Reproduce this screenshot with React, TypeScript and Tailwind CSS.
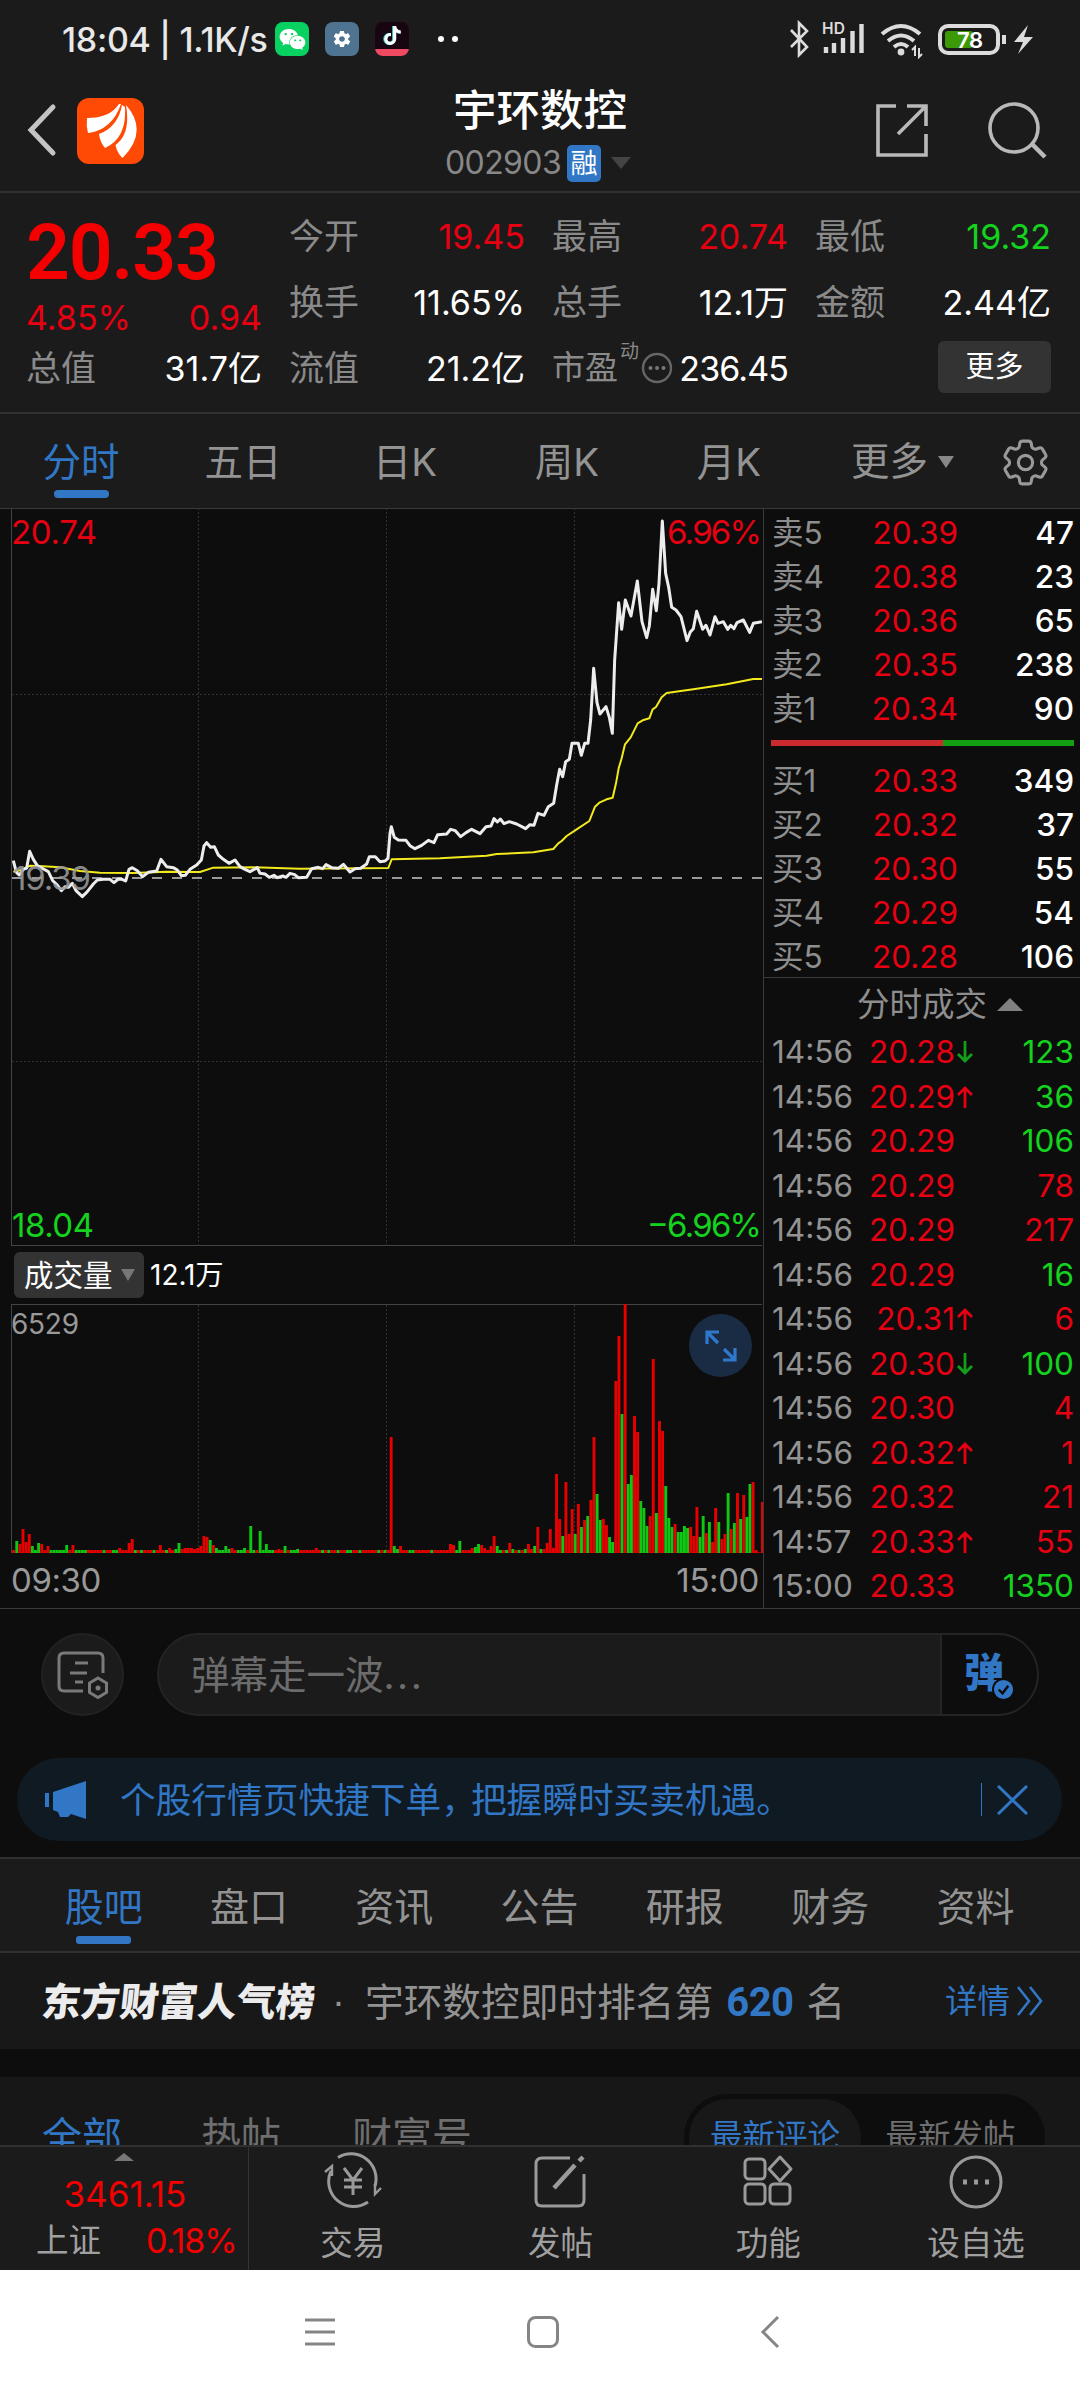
import { FaTiktok, FaWeixin } from "react-icons/fa";
import { HiOutlineCog6Tooth } from "react-icons/hi2";
import { IoMdSettings } from "react-icons/io";

const RED = "#e60012";
const GREEN = "#14d21e";

const PRICE_LINE =
    "40,1082 46,1105 50,1118 58,1125 70,1108 80,1104 89,1054 100,1078 112,1097 125,1104 145,1115 158,1142 172,1155 184,1172 195,1160 205,1162 217,1150 228,1172 247,1190 262,1175 280,1152 292,1140 310,1138 330,1138 342,1148 355,1137 366,1138 377,1143 387,1108 397,1103 412,1112 428,1130 445,1117 470,1113 483,1078 500,1100 520,1103 532,1110 544,1127 556,1126 570,1108 590,1095 604,1080 612,1038 620,1028 632,1042 643,1040 655,1065 670,1078 687,1090 705,1080 720,1100 735,1108 750,1115 772,1103 780,1120 795,1122 808,1132 822,1126 832,1133 848,1128 858,1132 870,1120 884,1124 895,1133 920,1132 935,1106 955,1102 968,1106 978,1094 995,1103 1015,1105 1030,1093 1050,1116 1065,1106 1082,1105 1100,1092 1108,1070 1126,1070 1140,1085 1155,1083 1164,1075 1170,1000 1174,980 1183,1012 1195,1020 1218,1021 1230,1037 1245,1046 1265,1036 1285,1021 1302,1028 1313,1004 1340,1002 1352,988 1366,992 1382,1010 1398,998 1415,988 1440,1001 1458,980 1473,978 1482,956 1492,966 1501,957 1512,971 1528,965 1550,972 1577,986 1590,974 1602,976 1614,940 1632,946 1645,920 1661,910 1670,855 1679,808 1688,830 1697,785 1708,778 1716,730 1735,730 1744,766 1754,730 1764,730 1772,660 1781,505 1791,608 1800,642 1818,620 1828,652 1837,700 1844,480 1856,308 1865,388 1876,300 1893,348 1912,243 1926,365 1940,413 1948,378 1958,268 1969,332 1977,250 1987,63 1997,220 2006,262 2015,322 2028,330 2043,350 2061,422 2071,396 2080,386 2090,334 2108,388 2118,376 2130,405 2145,350 2154,370 2170,365 2183,388 2192,376 2202,386 2211,368 2230,360 2249,397 2260,370 2286,365";

const AVERAGE_LINE =
    "40,1115 65,1110 90,1097 130,1099 180,1102 240,1113 300,1118 400,1119 500,1115 600,1116 640,1103 760,1102 900,1106 1165,1104 1175,1078 1320,1075 1460,1067 1490,1062 1600,1057 1660,1047 1675,1030 1685,1023 1700,1008 1730,988 1768,963 1785,920 1798,908 1820,898 1838,893 1848,850 1856,805 1865,775 1875,733 1892,712 1913,670 1928,661 1948,655 1958,628 1968,621 1985,592 2000,579 2080,568 2180,553 2260,537 2286,537";

// minute index -> bar height, negative means a falling minute
const MORNING: Record<number, number> = {
    1: -12, 2: 9, 3: 24, 4: 11, 5: 19, 6: -7, 7: -3, 8: -10, 9: 9, 11: 7, 17: -8, 19: 8, 34: 5, 37: 10, 38: 14,
    47: 8, 50: 5, 52: -4, 53: -10, 54: 4, 55: 5, 56: 5, 57: 5, 58: 4, 59: 5, 60: 7, 61: 17, 62: 16, 63: -13, 64: 8,
    65: -5, 68: -7, 69: -4, 70: 5, 74: -5, 76: -27, 79: -22, 81: -9, 85: 4, 87: -7, 91: -4, 97: 5, 121: 116,
    122: -7, 123: -4, 124: 7, 140: 9, 141: 8, 143: -12, 147: 5, 148: -6, 149: -9, 150: 8, 151: 5, 153: 7, 154: 17,
    155: -7, 159: 10, 160: -4, 164: -4, 165: 9, 166: 4, 167: -7, 168: 26, 169: -4, 170: 4, 171: 10, 172: 24, 173: 5,
};
const RALLY = [
    79, 34, -17, 71, 19, 44, -19, 49, -26, 33, -37, 53, 116, -59, -33, 34, 28, -16, -11, 172, 217, -139, 249, -69, -78,
    137, 121, -52, -45, -27, 37, 194, -40, 132, 122, -67, -35, -26, 29, -21, -21, -27, -25, 26, 17, 46, -16, -37, 20,
    -31, 11, 45, -31, 14, 19, -60, 24, -30, 60, -34, 58, -36, -69, 71, 3, 0, 51,
];
const QUIET_GREEN = [12, 13, 14, 15, 16, 20, 21, 22, 23, 29, 32, 33, 39, 41, 45, 49, 66, 67, 72, 73, 77, 80, 82, 83, 89, 90, 99, 101, 104, 107, 108, 111, 117, 119, 127, 128, 134, 142, 156, 158, 162];

const volumeBars = Array.from({ length: 241 }, (_, i) => {
    if (i >= 174) return RALLY[i - 174];
    return MORNING[i] ?? (QUIET_GREEN.includes(i) ? -3 : 3);
});

const asks = [
    ["卖5", "20.39", "47"],
    ["卖4", "20.38", "23"],
    ["卖3", "20.36", "65"],
    ["卖2", "20.35", "238"],
    ["卖1", "20.34", "90"],
];
const bids = [
    ["买1", "20.33", "349"],
    ["买2", "20.32", "37"],
    ["买3", "20.30", "55"],
    ["买4", "20.29", "54"],
    ["买5", "20.28", "106"],
];

type Trade = { time: string; price: string; dir?: "up" | "down"; volume: string; buy?: boolean };

const trades: Trade[] = [
    { time: "14:56", price: "20.28", dir: "down", volume: "123" },
    { time: "14:56", price: "20.29", dir: "up", volume: "36" },
    { time: "14:56", price: "20.29", volume: "106" },
    { time: "14:56", price: "20.29", volume: "78", buy: true },
    { time: "14:56", price: "20.29", volume: "217", buy: true },
    { time: "14:56", price: "20.29", volume: "16" },
    { time: "14:56", price: "20.31", dir: "up", volume: "6", buy: true },
    { time: "14:56", price: "20.30", dir: "down", volume: "100" },
    { time: "14:56", price: "20.30", volume: "4", buy: true },
    { time: "14:56", price: "20.32", dir: "up", volume: "1", buy: true },
    { time: "14:56", price: "20.32", volume: "21", buy: true },
    { time: "14:57", price: "20.33", dir: "up", volume: "55", buy: true },
    { time: "15:00", price: "20.33", volume: "1350" },
];

function StatusBar() {
    return (
        <div className="flex h-[78px] items-center pl-[62px] pr-[47px] text-[#e8e8e8]">
            <span className="w-[213px] whitespace-nowrap text-[34px] font-medium tracking-[-0.3px]">18:04 | 1.1K/s</span>
            <div className="flex size-[34px] items-center justify-center rounded-[8px] bg-[#07d160] text-white">
                <FaWeixin size={27} />
            </div>
            <div className="ml-4 flex size-[34px] items-center justify-center rounded-[8px] bg-[#4f7491] text-white">
                <IoMdSettings size={20} />
            </div>
            <div className="relative ml-4 flex size-[34px] justify-center overflow-hidden rounded-[8px] bg-[#170512] pt-1 text-white">
                <FaTiktok className="drop-shadow-[-1px_0_0_#25c4be]" size={19} />
                <div className="absolute inset-x-0 bottom-0 h-[7px] bg-[#f04a62]" />
            </div>
            <div className="ml-[29px] flex gap-2">
                <i className="size-[6px] rounded-full bg-white" />
                <i className="size-[6px] rounded-full bg-white" />
            </div>
            <svg className="ml-auto" width="246" height="40" viewBox="787 19 246 40" fill="none" stroke="#dcdcdc">
                <path d="M791 30l16 17-8 8V23l8 8-16 16" strokeWidth="2.6" />
                <text x="822" y="34" fontSize="15.500" fontWeight="600" fill="#dcdcdc" stroke="none" textLength="23">HD</text>
                <path d="M826 53v-6M834 53V43M843 53V38M852.5 53V31M861.5 53V24" strokeWidth="4.4" />
                <path d="M882 34q19-16 38 0M888 41q13-11 26 0M894 47q7-6 14 0" strokeWidth="4" />
                <circle cx="901" cy="52" r="3.4" fill="#dcdcdc" stroke="none" />
                <path d="M915 56v-9l-3 3M919 48v9l3-3" strokeWidth="2" />
                <rect x="940" y="26" width="58" height="27" rx="8" strokeWidth="4" />
                <rect x="945" y="31" width="28" height="17" rx="3" fill="#3c9a06" stroke="none" />
                <path d="M1004 35v9" strokeWidth="4" />
                <text x="957" y="47.500" fontSize="22" fontWeight="600" fill="#fff" stroke="none" textLength="26">78</text>
                <path d="M1028 25l-14 17h9l-5 12 15-17h-9z" fill="#dcdcdc" stroke="none" />
            </svg>
        </div>
    );
}

function Header() {
    return (
        <div className="flex h-[115px] border-b-2 border-[#303030] pl-[26px] pr-[33px]">
            <svg width="120" height="100" viewBox="26 78 120 100" fill="none">
                <path d="M53 107L31 130l22 23" stroke="#c4c4c4" strokeWidth="5" strokeLinecap="round" />
                <rect x="77" y="98" width="67" height="66" rx="12" fill="#ff4a06" />
                <g fill="#fff">
                    <path d="M119 104Q110 118 87 118Q86 126 88 133Q112 130 121 104z" />
                    <path d="M122 105Q118 127 99 134Q100 142 105 148Q127 138 125 107z" />
                    <path d="M126 105Q131 134 115.500 145Q117 153 122.500 158Q149 131 126 105z" />
                </g>
            </svg>
            <div className="flex flex-1 flex-col items-center pl-[61px] pt-[7px]">
                <span className="text-[43.500px] font-medium leading-[50px] text-white">宇环数控</span>
                <div className="flex items-center pr-[4px]">
                    <span className="w-[122px] text-[32px] leading-[56px] tracking-[-0.6px] text-[#888]">002903</span>
                    <span className="flex h-[37px] w-[34px] items-center justify-center rounded-[5px] bg-[#3177c6] text-[27px] leading-none text-white">融</span>
                    <svg className="ml-[10px]" width="20" height="12" viewBox="0 0 20 12"><path d="M0 0h20L10 12z" fill="#444" /></svg>
                </div>
            </div>
            <svg className="mt-[16px]" width="174" height="70" viewBox="873 94 174 70" fill="none" stroke="#b9b9b9" strokeWidth="3.6">
                <path d="M896 106h-18v49h48v-21M898 134l28-28M907 106h19v20" />
                <circle cx="1014" cy="128" r="24" />
                <path d="M1032 144l13 13" strokeWidth="4.500" />
            </svg>
        </div>
    );
}

function Quote({ label, value, color = "text-white" }: { label: string; value: string; color?: string }) {
    return (
        <div className="flex h-[66px] items-center justify-between">
            <span className="text-[35px] text-[#8a8a8a]">{label}</span>
            <span className={`text-[34px] ${color}`}>{value}</span>
        </div>
    );
}

function Quotes() {
    return (
        <div className="flex h-[221px] gap-[27px] border-b-2 border-[#303030] pl-[26px] pr-[28px] pt-[10px]">
            <div className="w-[236px]">
                <div className="flex h-[92px] items-center pt-[8px] font-[Roboto] text-[77px] font-semibold leading-none tracking-[-1.2px] text-[#f50000]">20.33</div>
                <div className="flex h-[40px] items-center justify-between pt-1 text-[34px] text-[#e60012]">
                    <span>4.85%</span>
                    <span>0.94</span>
                </div>
                <Quote label="总值" value="31.7亿" />
            </div>
            <div className="w-[236px]">
                <Quote label="今开" value="19.45" color="text-[#e60012]" />
                <Quote label="换手" value="11.65%" />
                <Quote label="流值" value="21.2亿" />
            </div>
            <div className="w-[236px]">
                <Quote label="最高" value="20.74" color="text-[#e60012]" />
                <Quote label="总手" value="12.1万" />
                <div className="flex h-[66px] items-center">
                    <span className="text-[33px] text-[#8a8a8a]">市盈</span>
                    <span className="mb-8 ml-[2px] w-[20px] text-[19px] text-[#8a8a8a]">动</span>
                    <svg className="ml-px" width="32" height="32" viewBox="0 0 32 32" fill="#777">
                        <circle cx="16" cy="16" r="14" fill="none" stroke="#666" strokeWidth="2.4" />
                        <circle cx="9.500" cy="16" r="2" />
                        <circle cx="16" cy="16" r="2" />
                        <circle cx="22.500" cy="16" r="2" />
                    </svg>
                    <span className="ml-auto text-[34px] tracking-[-0.9px] text-white">236.45</span>
                </div>
            </div>
            <div className="flex w-[236px] flex-col">
                <Quote label="最低" value="19.32" color="text-[#14d21e]" />
                <Quote label="金额" value="2.44亿" />
                <button className="mt-[6px] h-[52px] w-[113px] self-end rounded-[6px] bg-[#333] text-[29px] text-white">更多</button>
            </div>
        </div>
    );
}

function PeriodTabs() {
    return (
        <div className="flex h-[94px] text-[38.500px] text-[#939393]">
            {["分时", "五日", "日K", "周K", "月K"].map((tab, i) => (
                <div key={tab} className={`flex w-[162px] flex-col items-center pt-[20px] leading-[56px] ${i === 0 ? "text-[#3177c6]" : ""}`}>
                    {tab}
                    {i === 0 && <div className="h-[8px] w-[55px] rounded-full bg-[#3177c6]" />}
                </div>
            ))}
            <div className="ml-[41px] flex h-[96px] items-center">
                更多
                <svg className="ml-[10px]" width="16" height="12" viewBox="0 0 16 12"><path d="M0 0h16L8 12z" fill="#888" /></svg>
            </div>
            <HiOutlineCog6Tooth className="ml-[43px] mt-[20px] text-[#999]" size={57} strokeWidth={1.3} />
        </div>
    );
}

function PriceChart() {
    return (
        <svg className="block" width="762" height="737" viewBox="0 509 762 737" fontSize="33">
            <g stroke="#3a3a3a" fill="none">
                <path d="M11.500 508V1245.500M11 1245.500H762" stroke="#444" />
                <path d="M198.500 508v738M386.500 508v738M574.500 508v738M12 694.500h750M12 1061.500h750" strokeDasharray="2 2" stroke="#333" />
                <path d="M12 878h750" stroke="#999" strokeWidth="2" strokeDasharray="10 10" />
            </g>
            <g transform="translate(0 500) scale(.33333)" fill="none" strokeLinejoin="round">
                <polyline points={AVERAGE_LINE} stroke="#f2ea1c" strokeWidth="6" />
                <polyline points={PRICE_LINE} stroke="#ededed" strokeWidth="9" />
            </g>
            <text x="11" y="544" fill={RED} textLength="86">20.74</text>
            <text x="667" y="544" fill={RED} textLength="95">6.96%</text>
            <text x="13" y="890" fill="#999" fillOpacity=".9" textLength="78">19.39</text>
            <text x="12" y="1237" fill={GREEN} textLength="82">18.04</text>
            <text x="647" y="1237" fill={GREEN} textLength="115">−6.96%</text>
        </svg>
    );
}

function VolumeChart() {
    return (
        <svg className="block" width="763" height="249" viewBox="0 1304 763 249">
            <path d="M11.500 1553V1304.500H762" stroke="#444" fill="none" />
            <path d="M198.500 1305v248M386.500 1305v248M574.500 1305v248" strokeDasharray="2 2" stroke="#333" />
            <path d="M12 1552.500h750" stroke="#a00008" />
            {volumeBars.map((v, i) => (
                <rect key={i} x={12.2 + i * 3.12} y={1553 - Math.abs(v)} width="2.9" height={Math.abs(v)} fill={v < 0 ? "#0fc814" : "#e80000"} />
            ))}
            <text x="11" y="1334" fontSize="28" fill="#999" textLength="68">6529</text>
            <circle cx="720.500" cy="1345.500" r="31.500" fill="#1a2c44" />
            <g stroke="#2f78cc" strokeWidth="3.2" fill="none">
                <path d="M719 1332h-12v12M707 1332l11 11" />
                <path d="M723 1360h12v-12M735 1360l-11-11" />
            </g>
        </svg>
    );
}

function BookRow({ row }: { row: string[] }) {
    return (
        <div className="flex h-[44px] items-center text-[31.500px]">
            <span className="w-[70px] text-[31.500px] text-[#8e8e8e]">{row[0]}</span>
            <span className="w-[116px] text-right text-[#e60012]">{row[1]}</span>
            <span className="flex-1 text-right font-[450] text-white">{row[2]}</span>
        </div>
    );
}

function TradeArrow({ dir }: { dir: "up" | "down" }) {
    return (
        <svg width="16" height="24" viewBox="0 0 16 24" fill="none" strokeWidth="2.8" stroke={dir === "up" ? RED : "#12a01a"}>
            {dir === "up" ? <path d="M8 23V3M1 10l7-7 7 7" /> : <path d="M8 1v20M1 14l7 7 7-7" />}
        </svg>
    );
}

function OrderBook() {
    return (
        <div className="flex w-[317px] flex-col text-[31.500px]">
            <div className="h-[469px] border-b border-[#3a3a3a] pl-[8px] pr-[6px] pt-[2px]">
                {asks.map((row) => <BookRow key={row[0]} row={row} />)}
                <div className="my-[9px] -ml-px flex h-[6px]">
                    <div className="w-[172px] bg-[#cb2a2e]" />
                    <div className="flex-1 bg-[#12a012]" />
                </div>
                <div className="pt-[4px]">
                    {bids.map((row) => <BookRow key={row[0]} row={row} />)}
                </div>
            </div>
            <div className="flex h-[52px] items-center justify-center gap-[10px] pt-[3px] text-[32.500px] text-[#8e8e8e]">
                <span className="ml-[36px]">分时成交</span>
                <svg className="-mt-[2px]" width="26" height="13" viewBox="0 0 26 13"><path d="M0 13h26L13 0z" fill="#808080" /></svg>
            </div>
            <div className="pl-[8px] pr-[6px]">
                {trades.map((t, i) => (
                    <div key={i} className="flex h-[44.500px] items-center">
                        <span className="w-[84px] text-[#939393]">{t.time}</span>
                        <span className="w-[99px] text-right text-[#e60012]">{t.price}</span>
                        <span className="ml-[2px] w-[18px]">{t.dir && <TradeArrow dir={t.dir} />}</span>
                        <span className={`flex-1 text-right ${t.buy ? "text-[#e60012]" : "text-[#14d21e]"}`}>{t.volume}</span>
                    </div>
                ))}
            </div>
        </div>
    );
}

function Danmu() {
    return (
        <div className="flex h-[107px] items-end pl-[41px]">
            <div className="flex size-[83px] items-center justify-center rounded-full border-2 border-[#222] bg-[#1b1b1b]">
                <svg width="52" height="48" viewBox="0 0 52 48" fill="none" stroke="#7a7a7a" strokeWidth="3">
                    <path d="M26 40H7q-5 0-5-5V7q0-5 5-5h34q5 0 5 5v15" />
                    <path d="M18 12h13M13 22h17M18 31h8" />
                    <path d="M41 27l8.500 5v9.500L41 46.500l-8.500-5V32z" />
                    <circle cx="41" cy="37" r="2.500" fill="#7a7a7a" stroke="none" />
                </svg>
            </div>
            <div className="ml-[33px] flex h-[83px] w-[882px] overflow-hidden rounded-full border-2 border-[#242424] bg-[#1b1b1b]">
                <span className="flex-1 pl-[32px] text-[38.500px] leading-[80px] text-[#6c6c6c]">弹幕走一波<span className="tracking-[2.500px]">...</span></span>
                <div className="relative w-[97px] border-l-2 border-[#242424] bg-[#0d0d0d] pl-[22px] text-[40px] font-black leading-[76px] text-[#3177c6]">
                    弹
                    <svg className="absolute left-[50px] top-[43px]" width="23" height="23" viewBox="0 0 24 24">
                        <circle cx="12" cy="12" r="11" fill="#3177c6" stroke="#0d0d0d" strokeWidth="2" />
                        <path d="M7 12l4 4 6-8" fill="none" stroke="#0d0d0d" strokeWidth="2.500" />
                    </svg>
                </div>
            </div>
        </div>
    );
}

function Notice() {
    return (
        <div className="ml-[17px] mr-[18px] mt-[42px] flex h-[83px] items-center rounded-full bg-[#101a22] pl-[28px] text-[#3177c6]">
            <svg width="42" height="38" viewBox="0 0 42 38" fill="#3177c6">
                <path d="M0 12h4v14H0zM8 11L41 0v38l-15-5-3 3h-8l-2-5-5-2z" />
            </svg>
            <span className="ml-[33px] whitespace-nowrap pt-[2px] text-[35.700px]">
                个股行情页快捷下单<span className="tracking-[-6px]">，</span>把握瞬时买卖机遇。
            </span>
            <div className="ml-auto h-[33px] w-px bg-[#3177c6]" />
            <svg className="ml-[15px] mr-[34px]" width="31" height="30" viewBox="0 0 31 30" stroke="#3177c6" strokeWidth="3">
                <path d="M1 1l29 28M30 1L1 29" />
            </svg>
        </div>
    );
}

function SectionTabs() {
    return (
        <div className="flex h-[96px] border-y-2 border-[#303030] bg-[#1b1b1b] pl-[31px] text-[39px] text-[#939393]">
            {["股吧", "盘口", "资讯", "公告", "研报", "财务", "资料"].map((tab, i) => (
                <div key={tab} className={`flex w-[145.300px] flex-col items-center pt-[19px] leading-[58px] ${i === 0 ? "text-[#3177c6]" : ""}`}>
                    {tab}
                    {i === 0 && <div className="h-[8px] w-[55px] rounded-[3px] bg-[#3177c6]" />}
                </div>
            ))}
        </div>
    );
}

function Ranking() {
    return (
        <div className="flex h-[96px] items-center bg-[#181818] pl-[42px] pt-[3px] text-[38.700px] text-[#939393]">
            <span className="w-[280px] -skew-x-6 whitespace-nowrap text-[39px] font-black text-[#ececec]">东方财富人气榜</span>
            <span className="w-[43px] pl-[10px] font-['Liberation_Sans']">·</span>
            <span className="whitespace-nowrap">宇环数控即时排名第</span>
            <span className="mx-[13px] font-[Roboto] text-[40px] font-bold tracking-[-0.5px] text-[#3177c6]">620</span>
            <span>名</span>
            <span className="ml-auto text-[32.500px] text-[#3177c6]">详情</span>
            <svg className="-mt-1 ml-[7px] mr-[36px]" width="27" height="30" viewBox="0 0 27 30" fill="none" stroke="#3177c6" strokeWidth="2.600">
                <path d="M1 1l11 14L1 29M13 1l11 14-11 14" />
            </svg>
        </div>
    );
}

function PostFilter() {
    return (
        <div className="mt-[28px] flex h-[68px] overflow-hidden bg-[#171717] pl-[42px] leading-[58px] text-[#6e6e6e]">
            <span className="mt-[31px] w-[159px] text-[40px] text-[#3177c6]">全部</span>
            <span className="mt-[31px] w-[151px] text-[40px]">热帖</span>
            <span className="mt-[31px] text-[40px]">财富号</span>
            <div className="ml-auto mr-[35px] mt-[17px] flex h-[86px] w-[361px] shrink-0 rounded-[43px] bg-[#0d0d0d] p-[5px] text-[32.500px] leading-[76px]">
                <div className="w-[172px] rounded-[38px] bg-[#181818] text-center text-[#3177c6]">最新评论</div>
                <div className="flex-1 text-center">最新发帖</div>
            </div>
        </div>
    );
}

const actions = [
    {
        label: "交易",
        icon: (
            <>
                <path d="M15 5.500A25 25 0 0 1 52 34M45 50A25 25 0 0 1 8 19" />
                <path d="M2 20l7-6v10M58 36l-6 6V32" strokeWidth="2.400" />
                <path d="M21 16l9 12 9-12M30 28v15M21 28h18M21 35h18" />
            </>
        ),
    },
    {
        label: "发帖",
        icon: (
            <>
                <path d="M40 6H12q-6 0-6 6v36q0 6 6 6h36q6 0 6-6V22" />
                <path d="M24 36l21-23M49 9l4-4" strokeWidth="4.500" />
            </>
        ),
    },
    {
        label: "功能",
        icon: (
            <>
                <rect x="7" y="7" width="20" height="20" rx="4" />
                <rect x="7" y="32" width="20" height="20" rx="4" />
                <rect x="32" y="32" width="20" height="20" rx="4" />
                <path d="M42 5l11 12-11 12-11-12z" strokeLinejoin="round" />
            </>
        ),
    },
    {
        label: "设自选",
        icon: (
            <>
                <circle cx="30" cy="30" r="25" />
                <path d="M17 30h4M28 30h4M39 30h4" strokeWidth="5" />
            </>
        ),
    },
];

function BottomBar() {
    return (
        <div className="flex h-[125px] border-t-2 border-[#303030] bg-[#1b1b1b] text-[#a0a0a0]">
            <div className="flex w-[249px] flex-col items-center border-r border-[#333]">
                <svg className="mt-[6px]" width="20" height="8" viewBox="0 0 20 8"><path d="M0 8h20L10 0z" fill="#777" /></svg>
                <span className="mt-[9px] pl-[2px] text-[35px] leading-[48px] text-[#f50000]">3461.15</span>
                <div className="flex w-full justify-between pl-[36px] pr-[11px] text-[32.500px] leading-[46px]">
                    <span>上证</span>
                    <span className="text-[34px] tracking-[-1px] text-[#f50000]">0.18%</span>
                </div>
            </div>
            {actions.map((a) => (
                <div key={a.label} className="flex w-[208px] flex-col items-center pt-[5px] text-[32.500px] leading-[40px]">
                    <svg className="mb-[12px]" width="60" height="60" viewBox="0 0 60 60" fill="none" stroke="#9a9a9a" strokeWidth="3">{a.icon}</svg>
                    {a.label}
                </div>
            ))}
        </div>
    );
}

export default function App() {
    return (
        <div className="h-[2400px] w-[1080px] overflow-hidden bg-[#0d0d0d] font-[Inter,'Noto_Sans_CJK_SC',sans-serif]">
            <div className="bg-[#1b1b1b]">
                <StatusBar />
                <Header />
                <Quotes />
                <PeriodTabs />
            </div>
            <div className="flex h-[1101px] border-y border-[#3a3a3a]">
                <div className="w-[764px] border-r border-[#3a3a3a]">
                    <PriceChart />
                    <div className="flex h-[58px] items-center pl-[14px]">
                        <div className="flex h-[46px] w-[130px] items-center rounded-[6px] bg-[#333] pl-[10px] text-[29.500px] text-white">
                            成交量
                            <svg className="ml-[8px]" width="14" height="12" viewBox="0 0 14 12"><path d="M0 0h14L7 12z" fill="#777" /></svg>
                        </div>
                        <span className="ml-[6px] text-[28px] text-white">12.1万</span>
                    </div>
                    <VolumeChart />
                    <div className="flex h-[55px] items-center justify-between pl-[11px] pr-[4px] pt-px text-[33px] tracking-[-0.400px] text-[#999]">
                        <span>09:30</span>
                        <span>15:00</span>
                    </div>
                </div>
                <OrderBook />
            </div>
            <div className="h-[248px]">
                <Danmu />
                <Notice />
            </div>
            <SectionTabs />
            <Ranking />
            <PostFilter />
            <BottomBar />
            <div className="h-[130px] bg-white">
                <svg className="block" width="1080" height="130" viewBox="0 2270 1080 130" fill="none" stroke="#858585" strokeWidth="3">
                    <path d="M305 2320h30M305 2332h30M305 2344h30" />
                    <rect x="528.500" y="2317.500" width="29" height="29" rx="7" />
                    <path d="M778 2317l-15 15 15 15" />
                </svg>
            </div>
        </div>
    );
}
